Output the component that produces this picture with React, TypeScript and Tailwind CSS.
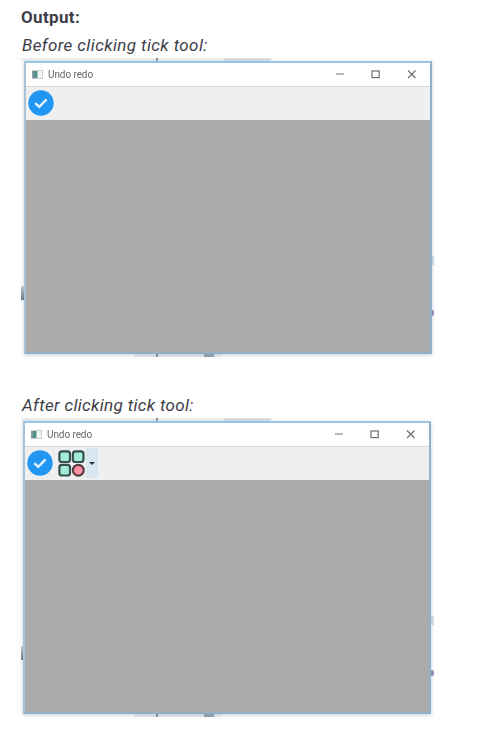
type Mark = { id: string; className: string };

const MARKS: Mark[] = [
  { id: 'top-left', className: 'left-0 top-0 h-[3px] w-[251px] bg-[#e9ecee]' },
  { id: 'top-tick', className: 'left-[135px] top-0 h-[3px] w-[2px] bg-[#777d84]' },
  { id: 'top-block', className: 'left-[203px] top-0 h-[3px] w-[46px] bg-[#d3d9de]' },
  { id: 'left-dark', className: 'left-0 top-[228px] h-[14px] w-[4px] bg-gradient-to-b from-[#c5cbd0] to-[#4d555d]' },
  { id: 'right-grey', className: 'left-[410px] top-[198px] h-[9px] w-[3px] bg-[#d3d9df]' },
  { id: 'right-purple', className: 'left-[409px] top-[252px] h-[6px] w-[4px] rounded-sm bg-[#77769f]' },
  { id: 'bottom-band', className: 'left-[113px] top-[295px] h-[4px] w-[87px] bg-[#e6eaed]' },
  { id: 'bottom-tick', className: 'left-[135px] top-[295px] h-[4px] w-[2px] bg-[#70777e]' },
  { id: 'bottom-dash', className: 'left-[183px] top-[296px] h-[3px] w-[10px] bg-[#868d94]' },
];

function TickIcon() {
  return (
    <svg className="size-[26px] shrink-0" viewBox="0 0 26 26">
      <circle cx="13" cy="13" r="12.7" fill="#2196f3" />
      <path d="M7.3 13.2 11.2 16.8 18.6 9.3" fill="none" stroke="#e3f2fd" strokeWidth="2.4" />
    </svg>
  );
}

function ShapesIcon() {
  return (
    <svg className="ml-[5px] size-[27px] shrink-0" viewBox="0 0 27 27">
      <g fill="#a3ead8" stroke="#36504d" strokeWidth="2.2">
        <rect x="1.4" y="1.4" width="10.6" height="10.6" rx="2.6" />
        <rect x="14.9" y="1.4" width="10.6" height="10.6" rx="2.6" />
        <rect x="1.4" y="14.9" width="10.6" height="10.6" rx="2.6" />
      </g>
      <circle cx="20.3" cy="20.2" r="5.4" fill="#ff8fa5" stroke="#573d45" strokeWidth="2.2" />
    </svg>
  );
}

function AppWindow({ clicked = false }: { clicked?: boolean }) {
  return (
    <div className={`relative h-[300px] w-[413px] pt-[3px] ${clicked ? 'pl-[2px]' : 'pl-[3px]'}`}>
      {MARKS.map((m) => (
        <div key={m.id} className={`absolute opacity-80 blur-[0.5px] ${m.className}`} />
      ))}
      <div className="relative flex h-[293px] w-[408px] flex-col border-2 border-[#94b0c6] border-t-[#9cc5e3] border-l-[#a9c4d8] bg-white shadow-[0_1px_4px_rgba(95,130,160,0.4)] blur-[0.5px]">
        <div className="flex h-[24px] shrink-0 items-center border-b border-[#d8d8d8] pl-[6px]">
          <svg className="h-[9px] w-[11px]" viewBox="0 0 11 9">
            <rect x=".5" y=".5" width="10" height="8" fill="#f2f5f5" stroke="#c6cfd2" />
            <rect x="0.5" y="1" width="5" height="7" fill="#4e9185" />
            <rect x="0.5" y="1" width="2" height="7" fill="#7793a0" />
          </svg>
          <span className="ml-[5px] font-[Roboto,sans-serif] text-[10px] leading-none tracking-[-0.08px] text-[#686868]">
            Undo redo
          </span>
          <svg className="mr-[13px] ml-auto h-[9px] w-[82px]" viewBox="0 0 82 9" fill="none" stroke="#707070" strokeWidth="1.2">
            <path d="M1 4h8M73 .5l7.5 7.5M80.5.5 73 8" />
            <rect x="37" y="1" width="7.2" height="6.6" />
          </svg>
        </div>
        <div className="flex h-[33px] shrink-0 items-center bg-[#efefef] pb-px pl-[2px]">
          <TickIcon />
          {clicked && (
            <>
              <ShapesIcon />
              <div className="ml-px flex h-[30px] w-[12px] items-center justify-center bg-[#d8e6f0]">
                <svg className="h-[3px] w-[6px]" viewBox="0 0 6 3">
                  <path d="M0 0h6L3 3Z" fill="#273746" />
                </svg>
              </div>
            </>
          )}
        </div>
        <div className="flex-1 bg-[#ababab]" />
      </div>
    </div>
  );
}

export default function App() {
  return (
    <main className="h-[734px] w-[495px] overflow-hidden bg-white pl-[21px] font-[Roboto,sans-serif] text-[#3d3d49]">
      <h1 className="h-[31px] pt-[5px] text-[17px] leading-[24px] font-bold tracking-[0.35px]">Output:</h1>
      <p className="h-[27px] pt-[2px] pl-px text-[17px] leading-[24px] tracking-[0.4px] italic">Before clicking tick tool:</p>
      <AppWindow />
      <p className="mt-[33px] h-[27px] pt-[2px] pl-px text-[17px] leading-[24px] tracking-[0.34px] italic">After clicking tick tool:</p>
      <AppWindow clicked />
    </main>
  );
}
